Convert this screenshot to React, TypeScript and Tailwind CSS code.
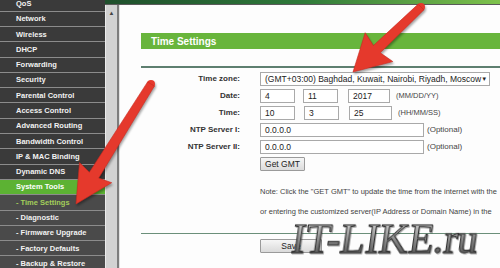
import React from "react";

type MenuItem = {
    label: string;
    sub?: boolean;
    active?: boolean;
    current?: boolean;
};

const menu: MenuItem[] = [
    { label: "QoS" },
    { label: "Network" },
    { label: "Wireless" },
    { label: "DHCP" },
    { label: "Forwarding" },
    { label: "Security" },
    { label: "Parental Control" },
    { label: "Access Control" },
    { label: "Advanced Routing" },
    { label: "Bandwidth Control" },
    { label: "IP & MAC Binding" },
    { label: "Dynamic DNS" },
    { label: "System Tools", active: true },
    { label: "- Time Settings", sub: true, current: true },
    { label: "- Diagnostic", sub: true },
    { label: "- Firmware Upgrade", sub: true },
    { label: "- Factory Defaults", sub: true },
    { label: "- Backup & Restore", sub: true },
];

function arrowPoints(
    tx: number,
    ty: number,
    hx: number,
    hy: number,
    tailW: number,
    neckW: number,
    headLen: number,
    headW: number
) {
    const dx = hx - tx;
    const dy = hy - ty;
    const len = Math.hypot(dx, dy);
    const ux = dx / len;
    const uy = dy / len;
    const nx = -uy;
    const ny = ux;
    const bx = hx - ux * headLen;
    const by = hy - uy * headLen;
    const pts = [
        [tx + (nx * tailW) / 2, ty + (ny * tailW) / 2],
        [bx + (nx * neckW) / 2, by + (ny * neckW) / 2],
        [bx + (nx * headW) / 2 - ux * 3, by + (ny * headW) / 2 - uy * 3],
        [hx, hy],
        [bx - (nx * headW) / 2 - ux * 3, by - (ny * headW) / 2 - uy * 3],
        [bx - (nx * neckW) / 2, by - (ny * neckW) / 2],
        [tx - (nx * tailW) / 2, ty - (ny * tailW) / 2],
    ];
    return pts.map((p) => p.map((v) => v.toFixed(1)).join(",")).join(" ");
}

function Arrow(props: {
    tx: number;
    ty: number;
    hx: number;
    hy: number;
    tailW: number;
    neckW: number;
    headLen: number;
    headW: number;
}) {
    const { tx, ty, hx, hy, tailW, neckW, headLen, headW } = props;
    return (
        <g>
            <circle cx={tx} cy={ty} r={tailW / 2} fill="#e5392c" />
            <polygon
                points={arrowPoints(tx, ty, hx, hy, tailW, neckW, headLen, headW)}
                fill="#e5392c"
                stroke="#c9291f"
                strokeWidth={0.6}
                strokeLinejoin="round"
            />
        </g>
    );
}

function Sidebar() {
    return (
        <div className="w-[105px] shrink-0 bg-[#3a3a3a] overflow-hidden">
            <div className="mt-[-3.6px] flex flex-col">
                {menu.map((m) => (
                    <div
                        key={m.label}
                        className={
                            "h-[15.3px] shrink-0 flex items-center pl-[16px] border-b border-[#8c8c8c] text-[7.5px] font-bold whitespace-nowrap " +
                            (m.active
                                ? "bg-[#5cb233] text-white"
                                : m.sub
                                  ? "bg-[#4a4a4a] " + (m.current ? "text-[#a3cf5a]" : "text-[#f2f2f2]")
                                  : "bg-[#3a3a3a] text-[#f2f2f2]")
                        }
                    >
                        {m.label}
                    </div>
                ))}
            </div>
        </div>
    );
}

function Field({ w, children }: { w: string; children?: React.ReactNode }) {
    return (
        <div
            className={
                "h-[14px] border border-[#a9a9a9] bg-white flex items-center pl-[4px] text-[8.5px] text-[#222] whitespace-nowrap " +
                w
            }
        >
            {children}
        </div>
    );
}

function Row({ label, children }: { label: string; children: React.ReactNode }) {
    return (
        <div className="h-[17px] flex items-center">
            <div className="w-[99px] text-right text-[8px] font-bold text-[#333]">{label}</div>
            <div className="ml-[20px] flex items-center">{children}</div>
        </div>
    );
}

export default function App() {
    return (
        <div className="relative w-[500px] h-[268px] overflow-hidden bg-white flex font-['Liberation_Sans',Arial,sans-serif]">
            <Sidebar />
            <div className="flex-1 flex flex-col min-w-0">
                <div className="h-[4px] bg-gradient-to-r from-[#1f4f2c] via-[#2f7a3a] to-[#7ec24c]" />
                <div className="h-[1px] bg-[#5a5a5a]" />
                <div className="flex flex-1">
                    <div className="w-[12px] bg-[#d2d2d2] border-l border-[#ececec] flex justify-center">
                        <span className="mt-[5px] text-[6px] text-[#444] leading-none">▲</span>
                    </div>
                    <div className="w-[2px] bg-[#7d7d7d]" />
                    <div className="w-[1px] bg-[#e2e2e2]" />
                    <div className="flex-1 bg-[#fdfdfd] pl-[21px] min-w-0">
                        <div className="mt-[28px] h-[16px] bg-[#68b53c] flex items-center pl-[10px] text-[10px] font-bold text-white">
                            Time Settings
                        </div>
                        <div className="mt-[17px] h-[1.5px] bg-[#5e7f70]" />
                        <div className="mt-[3px] flex flex-col">
                            <Row label="Time zone:">
                                <div className="h-[14px] w-[230px] border border-[#a9a9a9] bg-white flex items-center justify-between pl-[4px] pr-[3px] text-[8.5px] text-[#222] whitespace-nowrap">
                                    <span>(GMT+03:00) Baghdad, Kuwait, Nairobi, Riyadh, Moscow</span>
                                    <span className="text-[6px]">▼</span>
                                </div>
                            </Row>
                            <Row label="Date:">
                                <Field w="w-[35px]">4</Field>
                                <div className="ml-[8px]">
                                    <Field w="w-[35px]">11</Field>
                                </div>
                                <div className="ml-[10px]">
                                    <Field w="w-[42px]">2017</Field>
                                </div>
                                <span className="ml-[6px] text-[7.5px] text-[#444]">(MM/DD/YY)</span>
                            </Row>
                            <Row label="Time:">
                                <Field w="w-[35px]">10</Field>
                                <div className="ml-[9px]">
                                    <Field w="w-[35px]">3</Field>
                                </div>
                                <div className="ml-[10px]">
                                    <Field w="w-[43px]">25</Field>
                                </div>
                                <span className="ml-[6px] text-[7.5px] text-[#444]">(HH/MM/SS)</span>
                            </Row>
                            <Row label="NTP Server I:">
                                <Field w="w-[164px]">0.0.0.0</Field>
                                <span className="ml-[3px] text-[8px] text-[#444]">(Optional)</span>
                            </Row>
                            <Row label="NTP Server II:">
                                <Field w="w-[164px]">0.0.0.0</Field>
                                <span className="ml-[3px] text-[8px] text-[#444]">(Optional)</span>
                            </Row>
                            <Row label="">
                                <div className="h-[14px] w-[45px] border border-[#9a9a9a] rounded-[1px] bg-gradient-to-b from-[#f6f6f6] to-[#dcdcdc] flex items-center justify-center text-[8.5px] text-[#222]">
                                    Get GMT
                                </div>
                            </Row>
                        </div>
                        <div className="mt-[9px] ml-[119px] text-[7.5px] text-[#444] whitespace-nowrap">
                            <div className="h-[20px] flex items-center">
                                Note: Click the "GET GMT" to update the time from the internet with the
                            </div>
                            <div className="h-[20px] flex items-center">
                                or entering the customized server(IP Address or Domain Name) in the
                            </div>
                        </div>
                        <div className="mt-[11px] h-[1.5px] bg-[#6b8f7a]" />
                        <div className="mt-[5px] ml-[119px] h-[14px] w-[62px] border border-[#9a9a9a] rounded-[1px] bg-gradient-to-b from-[#f6f6f6] to-[#dadada] flex items-center justify-center text-[8.5px] text-[#222]">
                            Save
                        </div>
                    </div>
                </div>
            </div>

            <svg
                className="absolute left-0 top-0 pointer-events-none drop-shadow-[1px_2px_1px_rgba(0,0,0,0.35)]"
                width={500}
                height={268}
                viewBox="0 0 500 268"
            >
                <Arrow tx={421} ty={7} hx={353} hy={72} tailW={8} neckW={10} headLen={33} headW={40} />
                <Arrow tx={151} ty={84} hx={76} hy={204} tailW={8} neckW={11} headLen={34} headW={38} />
            </svg>

            <div className="absolute left-[292px] top-[219px] font-['Liberation_Serif',serif] text-[41px] leading-none whitespace-nowrap skew-x-[-8deg] bg-gradient-to-b from-[#e2e2e2] via-[#8c8c8c] to-[#4a4a4a] bg-clip-text text-transparent [-webkit-text-stroke:1px_#2e2e2e] drop-shadow-[1px_1px_0_rgba(0,0,0,0.3)]">
                IT-LIKE.ru
            </div>
        </div>
    );
}
